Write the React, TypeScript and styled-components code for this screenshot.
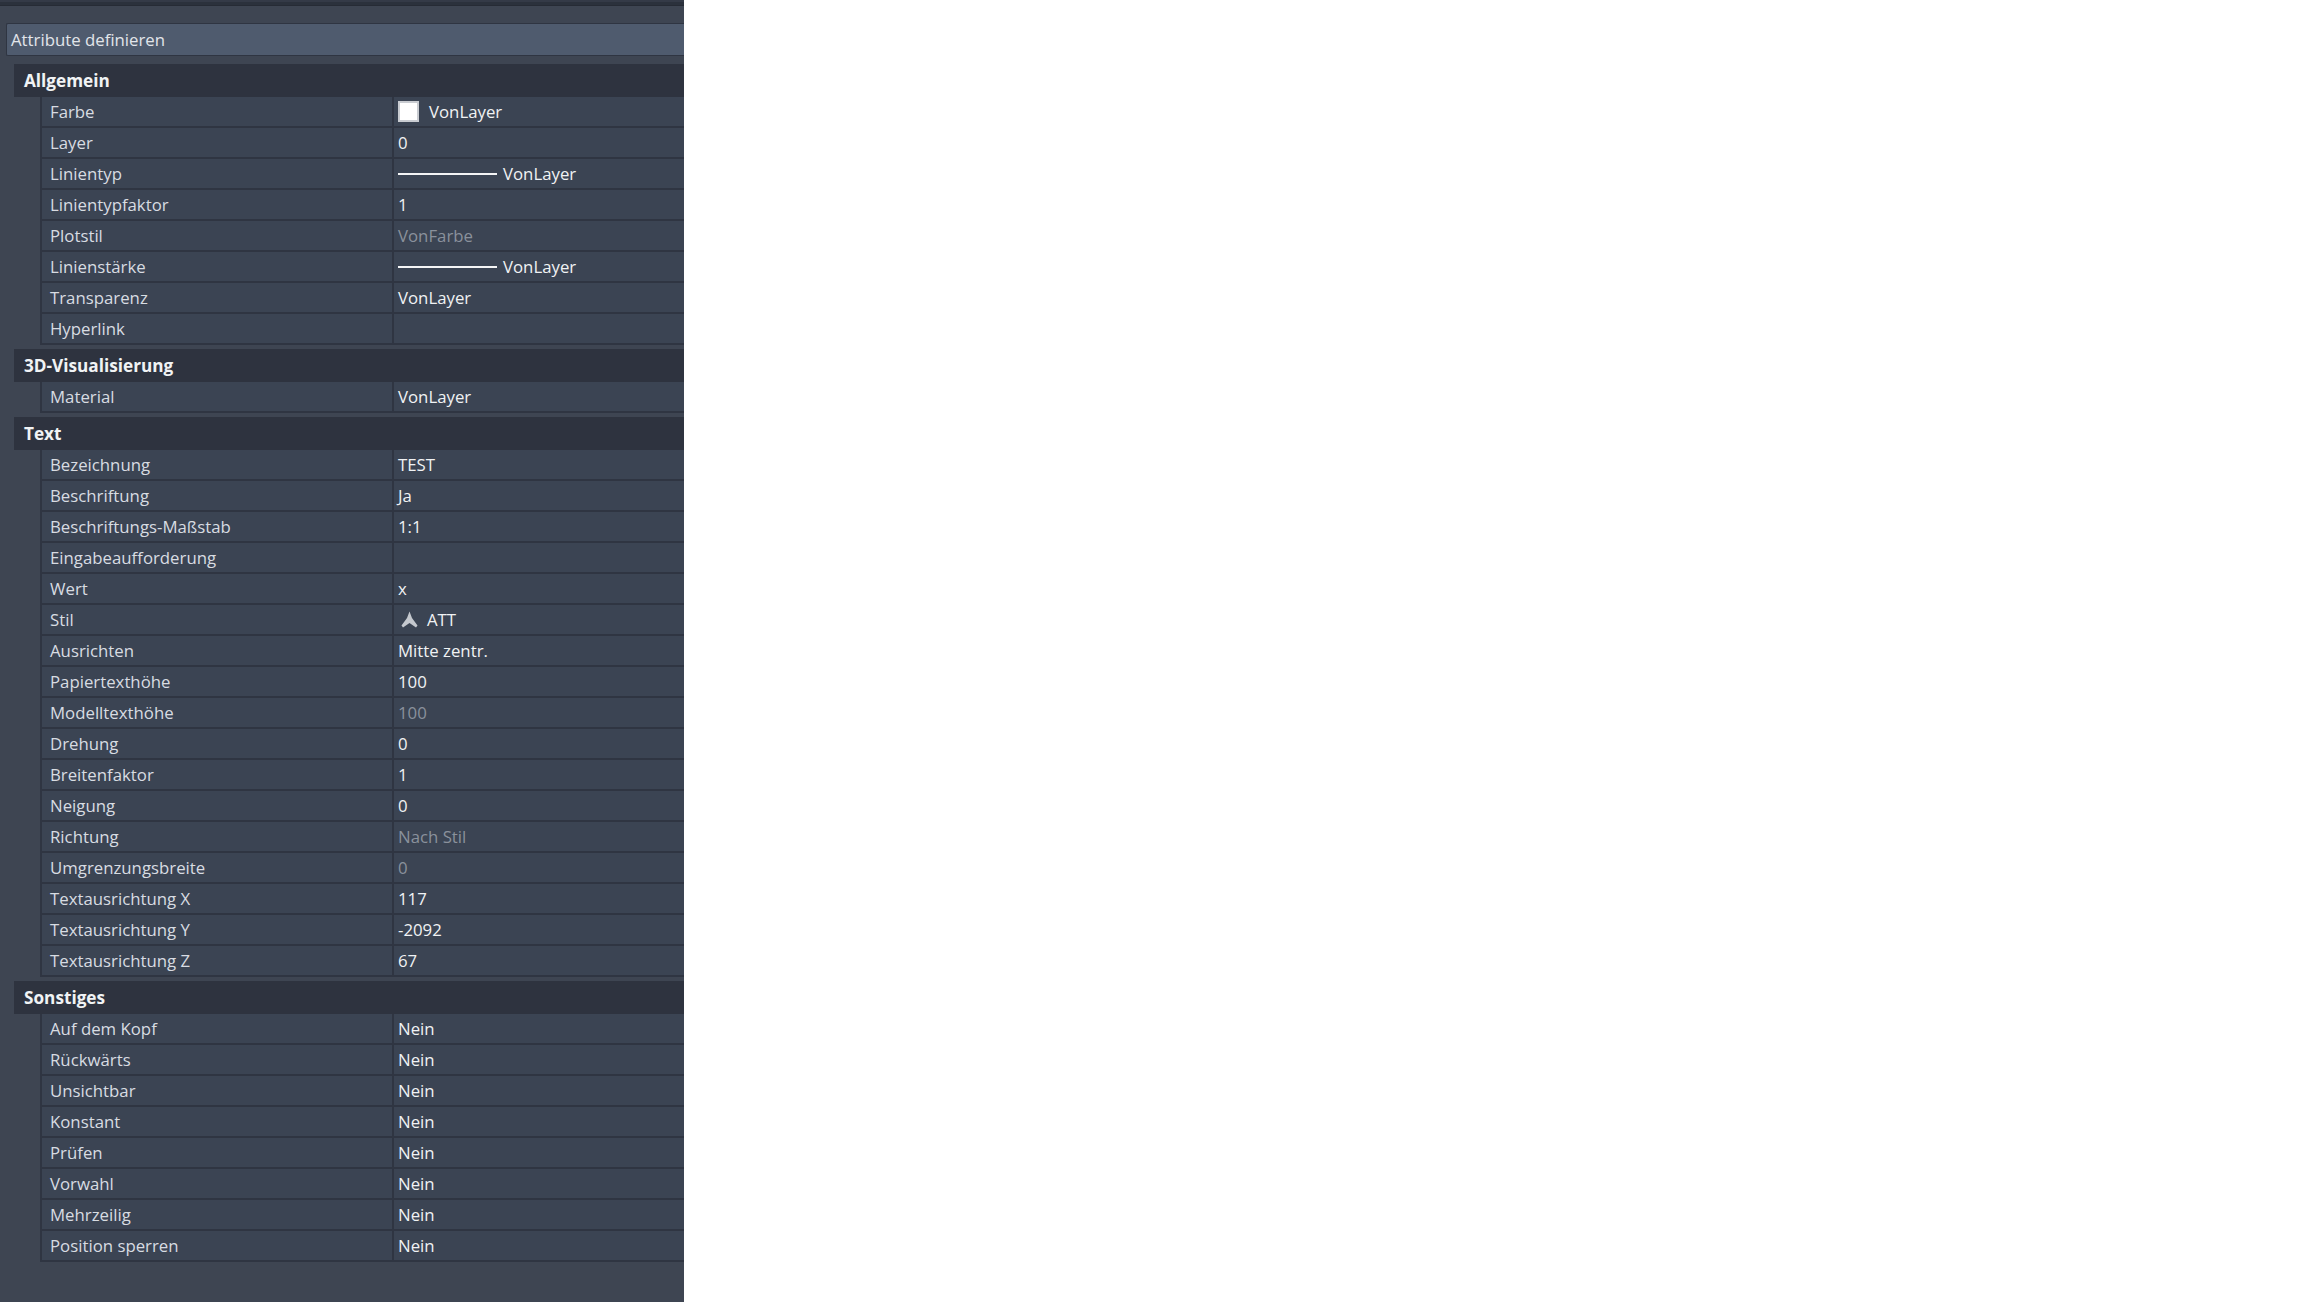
import styled, { createGlobalStyle } from "styled-components";

type Row = {
  label: string;
  value?: string;
  kind?: "swatch" | "line" | "style";
  muted?: boolean;
};

type Group = { title: string; rows: Row[] };

const nein = (label: string): Row => ({ label, value: "Nein" });

const groups: Group[] = [
  {
    title: "Allgemein",
    rows: [
      { label: "Farbe", value: "VonLayer", kind: "swatch" },
      { label: "Layer", value: "0" },
      { label: "Linientyp", value: "VonLayer", kind: "line" },
      { label: "Linientypfaktor", value: "1" },
      { label: "Plotstil", value: "VonFarbe", muted: true },
      { label: "Linienstärke", value: "VonLayer", kind: "line" },
      { label: "Transparenz", value: "VonLayer" },
      { label: "Hyperlink" },
    ],
  },
  {
    title: "3D-Visualisierung",
    rows: [{ label: "Material", value: "VonLayer" }],
  },
  {
    title: "Text",
    rows: [
      { label: "Bezeichnung", value: "TEST" },
      { label: "Beschriftung", value: "Ja" },
      { label: "Beschriftungs-Maßstab", value: "1:1" },
      { label: "Eingabeaufforderung" },
      { label: "Wert", value: "x" },
      { label: "Stil", value: "ATT", kind: "style" },
      { label: "Ausrichten", value: "Mitte zentr." },
      { label: "Papiertexthöhe", value: "100" },
      { label: "Modelltexthöhe", value: "100", muted: true },
      { label: "Drehung", value: "0" },
      { label: "Breitenfaktor", value: "1" },
      { label: "Neigung", value: "0" },
      { label: "Richtung", value: "Nach Stil", muted: true },
      { label: "Umgrenzungsbreite", value: "0", muted: true },
      { label: "Textausrichtung X", value: "117" },
      { label: "Textausrichtung Y", value: "-2092" },
      { label: "Textausrichtung Z", value: "67" },
    ],
  },
  {
    title: "Sonstiges",
    rows: [
      nein("Auf dem Kopf"),
      nein("Rückwärts"),
      nein("Unsichtbar"),
      nein("Konstant"),
      nein("Prüfen"),
      nein("Vorwahl"),
      nein("Mehrzeilig"),
      nein("Position sperren"),
    ],
  },
];

const GlobalStyle = createGlobalStyle`
  html, body {
    margin: 0;
    height: 100%;
    background: #ffffff;
  }
  body {
    font-family: "Open Sans", "Noto Sans", sans-serif;
    font-size: 16.8px;
  }
`;

const Panel = styled.div`
  width: 684px;
  height: 1302px;
  overflow: hidden;
  background: #3e4552;
  color: #d8dce2;
`;

const TopStrip = styled.div`
  height: 6px;
  box-sizing: border-box;
  background: #2b313c;
  border-top: 2px solid #343a47;
  border-bottom: 1px solid #262b35;
  margin-bottom: 17px;
`;

const TitleBar = styled.div`
  height: 33px;
  margin-left: 6px;
  padding-left: 4px;
  display: flex;
  align-items: center;
  background: #4f5b6e;
  color: #e2e5ea;
  border: 1px solid #2f3542;
  border-right: none;
  border-radius: 2px 0 0 2px;
  box-sizing: border-box;
  margin-bottom: 8px;
`;

const GroupBox = styled.section`
  margin-left: 14px;
  margin-bottom: 4px;
`;

const GroupHead = styled.div`
  height: 33px;
  padding-left: 10px;
  display: flex;
  align-items: center;
  background: #2e333f;
  color: #f1f3f5;
  font-size: 17.2px;
  font-weight: 700;
`;

const Rows = styled.div`
  margin-left: 26px;
  border-left: 2px solid #2f3542;
`;

const PropRow = styled.div`
  height: 31px;
  box-sizing: border-box;
  display: grid;
  grid-template-columns: 352px 1fr;
  background: #3b4453;
  border-bottom: 2px solid #2f3542;
`;

const Label = styled.div`
  padding-left: 8px;
  display: flex;
  align-items: center;
  border-right: 2px solid #2f3542;
`;

const Value = styled.div<{ $muted?: boolean }>`
  padding-left: 4px;
  display: flex;
  align-items: center;
  color: ${({ $muted }) => ($muted ? "#8a919c" : "#f0f2f4")};
`;

const Swatch = styled.span`
  width: 21px;
  height: 21px;
  box-sizing: border-box;
  background: #ffffff;
  border: 2px solid #c9ccd1;
  margin-right: 10px;
`;

const LineSample = styled.span`
  width: 99px;
  height: 2px;
  background: #f4f5f6;
  margin-right: 6px;
`;

const StyleIcon = styled.svg`
  width: 17px;
  height: 17px;
  margin: 0 9px 0 3px;
`;

function RowValue({ row }: { row: Row }) {
  return (
    <Value $muted={row.muted}>
      {row.kind === "swatch" && <Swatch />}
      {row.kind === "line" && <LineSample />}
      {row.kind === "style" && (
        <StyleIcon viewBox="0 0 17 17">
          <path
            d="M8.5 0.5 L11 7 L16.5 14.5 L15 16.5 L8.5 12 L2 16.5 L0.5 14.5 L6 7 Z"
            fill="#c4c8ce"
          />
        </StyleIcon>
      )}
      {row.value}
    </Value>
  );
}

export default function App() {
  return (
    <>
      <GlobalStyle />
      <Panel>
        <TopStrip />
        <TitleBar>Attribute definieren</TitleBar>
        {groups.map((group) => (
          <GroupBox key={group.title}>
            <GroupHead>{group.title}</GroupHead>
            <Rows>
              {group.rows.map((row) => (
                <PropRow key={row.label}>
                  <Label>{row.label}</Label>
                  <RowValue row={row} />
                </PropRow>
              ))}
            </Rows>
          </GroupBox>
        ))}
      </Panel>
    </>
  );
}
